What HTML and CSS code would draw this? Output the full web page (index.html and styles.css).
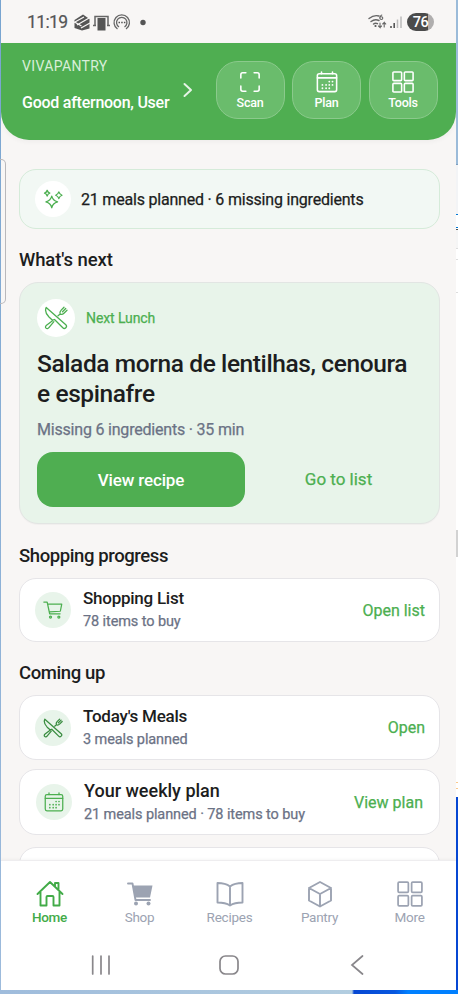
FILE: index.html
```html
<!DOCTYPE html>
<html lang="en">
<head>
<meta charset="utf-8">
<title>VivaPantry</title>
<link rel="stylesheet" href="styles.css">
</head>
<body>
<svg class="defs" aria-hidden="true">
  <symbol id="calendar" viewBox="0 0 24 24"><rect x="1.500" y="3" width="21" height="19.500" rx="2"/><path d="M1.500 7.500h21M6 1v2M18 1v2"/><path class="dots" d="M14.500 11.500h.01M18 11.500h.01M7 15.200h.01M11 15.200h.01M14.500 15.200h.01M18 15.200h.01M7 18.800h.01M11 18.800h.01M14.500 18.800h.01"/></symbol>
  <symbol id="grid" viewBox="0 0 24 24"><rect x="1" y="1" width="9.500" height="9.500" rx="1"/><rect x="13.500" y="1" width="9.500" height="9.500" rx="1"/><rect x="1" y="13.500" width="9.500" height="9.500" rx="1"/><rect x="13.500" y="13.500" width="9.500" height="9.500" rx="1"/></symbol>
  <symbol id="utensils" viewBox="0 0 24 24"><path d="M2.200 1.500C.8 4.500 2 8 5 11l3.500 3.200 2-.7 8.300 8.300c1 1 2.200.8 3 0s1-2 0-3L13 11z"/><path d="M8.500 14.800l-6 4.500c-1.200 1-1.300 2-.5 2.800s2 .7 2.900-.4l5-6M14 9.800l2.200-1.700c-.8-1.500-.2-2.800 1-4L20 1.300M23 4.200L20.200 7c-1.200 1.200-2.700 1.800-4 1.100M18.500 5.700l3.200-3.200"/></symbol>
</svg>
<div class="desktop">
  <div class="edge-left"></div>
  <main class="phone">
    <div class="status">
      <span class="clock">11:19</span>
      <svg class="notif" viewBox="0 0 78 20"><path fill="#555" d="M1.500 8L10 2.500l6.500 4.500v9.500L9 18.500l-7.500-2.500z"/><path stroke="#f8f6f5" stroke-width="1.300" fill="none" d="M1 10.500l10-5.500M4 13l13-7.500M8 16l9-5M1.500 10l7 4"/><path fill="none" stroke="#666" stroke-width="1.500" d="M22 13V4.500h13V13M20 13.500h3M34 13.500h3"/><path fill="#555" d="M24.500 6h8v12.500h-8z"/><g fill="none" stroke="#666" stroke-width="1.300"><path d="M44.500 17a7.700 7.700 0 1 1 8.500 0M46 15a5.200 5.200 0 1 1 5.500 0"/></g><path d="M45.500 10.500h7" stroke="#555" stroke-width="1.500" stroke-dasharray="1.500 1.200"/><circle cx="70" cy="10.500" r="2.700" fill="#555"/></svg>
      <svg class="signal" viewBox="0 0 36 18"><g fill="none" stroke="#666" stroke-width="1.400" stroke-linecap="round"><path d="M1 5.500q5-4 10-2.500M3 8.500q4-3 8-1M5.500 11q2-1.500 4-.3"/><path stroke-width="1.100" d="M13.800 2c-2.500 1-2.500 4.500-.5 4.500s2-2.800 0-2.800-1.500.8-1.500 1.300M12 10v4.500l-1.500-1.500M12 14.500l1.500-1.500M16.200 14V9.500L14.700 11M16.200 9.500l1.500 1.500"/></g><circle cx="7.500" cy="13" r="1.100" fill="#555"/><path stroke="#555" stroke-width="1.600" d="M23 15v-2M26.200 15v-5"/><path stroke="#bbb" stroke-width="1.500" d="M29.500 15V6.500M33 15V3.500"/></svg>
      <span class="battery">76</span>
    </div>
    <header class="header">
      <div class="hello"><div class="brand">VIVAPANTRY</div><div class="greeting">Good afternoon, User</div></div>
      <svg class="chev" viewBox="0 0 10 16"><path d="M1.500 2l6.500 6-6.500 6"/></svg>
      <div class="tiles">
        <div class="tile"><svg class="icon" viewBox="0 0 24 24"><path d="M2 7.500V4a2 2 0 0 1 2-2h3.500M16.500 2H20a2 2 0 0 1 2 2v3.500M22 16.500V20a2 2 0 0 1-2 2h-3.500M7.500 22H4a2 2 0 0 1-2-2v-3.500"/></svg><span>Scan</span></div>
        <div class="tile"><svg class="icon"><use href="#calendar"/></svg><span>Plan</span></div>
        <div class="tile"><svg class="icon"><use href="#grid"/></svg><span>Tools</span></div>
      </div>
    </header>
    <section class="content">
      <div class="summary">
        <div class="bubble"><svg class="icon sparkle" viewBox="0 0 24 24"><path d="M10.500 8.500q1.200 5.300 7 7-5.800 1.700-7 7-1.200-5.300-7-7 5.800-1.700 7-7zM5 1.500q.7 2.800 3.200 3.500Q5.700 5.700 5 8.500 4.300 5.700 1.800 5 4.300 4.300 5 1.500zM19 3.500q.9 3 3.800 4-2.900 1-3.800 4-.9-3-3.800-4 2.900-1 3.800-4z"/></svg></div>
        <span>21 meals planned · 6 missing ingredients</span>
      </div>
      <h2 class="first">What's next</h2>
      <article class="next">
        <div class="next-head"><div class="bubble big"><svg class="icon"><use href="#utensils"/></svg></div><span>Next Lunch</span></div>
        <h1>Salada morna de lentilhas, cenoura<br>e espinafre</h1>
        <p>Missing 6 ingredients · 35 min</p>
        <div class="buttons"><div class="primary">View recipe</div><div class="secondary">Go to list</div></div>
      </article>
      <h2 class="second">Shopping progress</h2>
      <div class="row shopping">
        <div class="bubble tint"><svg class="icon cart" viewBox="0 0 24 24"><path d="M1 2.500h4l3 14h12.500M5.500 5h17l-1.700 8.500-13.300.8"/><circle cx="9" cy="20.500" r="1.200"/><circle cx="19" cy="20.500" r="1.200"/></svg></div>
        <div class="info"><h3>Shopping List</h3><p>78 items to buy</p></div><span class="action">Open list</span>
      </div>
      <h2 class="third">Coming up</h2>
      <div class="row">
        <div class="bubble tint dark"><svg class="icon"><use href="#utensils"/></svg></div>
        <div class="info"><h3>Today's Meals</h3><p>3 meals planned</p></div><span class="action">Open</span>
      </div>
      <div class="row weekly">
        <div class="bubble tint"><svg class="icon"><use href="#calendar"/></svg></div>
        <div class="info"><h3>Your weekly plan</h3><p>21 meals planned · 78 items to buy</p></div><span class="action">View plan</span>
      </div>
      <div class="row last"></div>
    </section>
    <nav class="nav">
      <div class="tab active"><svg class="icon" viewBox="0 0 28 28"><path d="M1.500 14L14 2l12.500 12M4.500 12v13.500h6V17q0-1 1-1h5q1 0 1 1v8.500h6V12M19 6.500V3h3.500v7"/></svg><span>Home</span></div>
      <div class="tab"><svg class="icon" viewBox="0 0 28 28"><path d="M2 3.500h4.500l3 16.500H24"/><path fill="currentColor" stroke="none" d="M6.500 5.500h20l-2.500 12H9z"/><g fill="currentColor" stroke="none"><circle cx="10" cy="23.500" r="2"/><circle cx="22.500" cy="23.500" r="2"/></g></svg><span>Shop</span></div>
      <div class="tab"><svg class="icon" viewBox="0 0 28 28"><path d="M14 6.500Q9.500 3 1.500 3v19.500q8 0 12.500 3 4.500-3 12.500-3V3Q18.500 3 14 6.500zM14 6.500v19"/></svg><span>Recipes</span></div>
      <div class="tab"><svg class="icon" viewBox="0 0 28 28"><path d="M14 2l11 6v12.500l-11 6-11-6V8zM3 8l11 6 11-6M14 14v12.500"/></svg><span>Pantry</span></div>
      <div class="tab"><svg class="icon more"><use href="#grid"/></svg><span>More</span></div>
    </nav>
    <div class="system">
      <svg viewBox="0 0 20 20"><path d="M1.700 1v18M10 1v18M18 1v18"/></svg>
      <svg viewBox="0 0 20 20"><rect x="1" y="1" width="18" height="18" rx="5.500"/></svg>
      <svg viewBox="0 0 20 20"><path d="M15.500 1L5 10l10.500 9"/></svg>
    </div>
  </main>
  <div class="edge-right"><i class="sky"></i><i class="pane"></i><i class="lines"></i><i class="page"></i><i class="thumb"></i><i class="page2"></i><i class="deep"></i></div>
  <div class="edge-bottom"></div>
</div>
<div class="behind"></div>
</body>
</html>
```
FILE: styles.css
```css
* { box-sizing: border-box; }
body { margin: 0; position: relative; overflow: hidden; color: #1c1d20; font-family: Roboto, "Liberation Sans", sans-serif; font-weight: 500; letter-spacing: -.25px; }
h1, h2, h3, p { margin: 0; font-weight: 500; }
svg { display: block; flex: none; }
.defs { position: absolute; width: 0; height: 0; }
.desktop { display: grid; grid-template-columns: 1px 455px 2px; grid-template-rows: 990px 4px; }
.edge-left { background: linear-gradient(#78a4d0, #9dbbdc); }
.phone { display: flex; flex-direction: column; background: #f8f6f5; overflow: hidden; }
.edge-right { display: flex; flex-direction: column; background: #fff; }
.sky { height: 165px; background: #9bbbd9; border-bottom: 1px solid #7d9fc0; }
.pane { height: 83px; background: linear-gradient(#f3f4f6 49px, #0078d4 49px 50px, #fff 50px 62px, #0078d4 62px 63px, #fff 63px 64px, #555 64px 65px, #f5f5f5 65px); }
.lines { height: 45px; background: linear-gradient(#ddd 1px, #fff 1px 11px, #ddd 11px 12px, #fff 12px 44px, #ddd 44px); }
.page { height: 237px; }
.thumb { height: 27px; background: #d2d2d2; }
.page2 { height: 240px; background: linear-gradient(#fff 225px, #fac88c 225px 226px, #fff 226px 231px, #fac88c 231px 232px, #fff 232px); }
.deep { flex: 1; background: #0647d3; }
.edge-bottom { grid-column: 1 / -1; background: linear-gradient(90deg, #9fbcdc, #b2cde0 352px, #0647d3 354px, #0757df 395px, #0080ff 408px); }
.behind { position: absolute; left: 0; top: 159px; width: 6px; height: 145px; border: 1px solid #b9b8bb; border-left: 0; border-radius: 0 5px 5px 0; }

.status { flex: none; height: 43px; display: flex; align-items: center; padding-left: 26px; color: #555; }
.clock { width: 46px; font-size: 17.500px; font-weight: 400; line-height: 20px; letter-spacing: -.6px; -webkit-text-stroke: .2px; }
.notif { width: 78px; height: 20px; }
.signal { width: 36px; height: 18px; margin-left: 217px; }
.battery { width: 27px; height: 18px; margin-left: 3px; border-radius: 9px; background: linear-gradient(90deg, #4b4b4b 21px, #b0aeae 21px); color: #fff; font-size: 14.500px; line-height: 19px; text-align: center; letter-spacing: -.6px; }

.header { flex: none; height: 97px; display: flex; align-items: flex-start; padding: 0 18.500px 0 21px; background: #4fae51; color: #fff; border-radius: 0 0 28px 28px; box-shadow: 0 2px 5px #0000000a; }
.hello { width: 161px; padding-top: 13px; white-space: nowrap; }
.brand { font-size: 14px; font-weight: 400; line-height: 21px; letter-spacing: .35px; color: #d9efd9; }
.greeting { margin-top: 14px; font-size: 16px; line-height: 24px; }
.chev { width: 10px; height: 16px; margin-top: 39px; fill: none; stroke: #e5f3e5; stroke-width: 2; stroke-linecap: round; stroke-linejoin: round; }
.tiles { margin: 18px 0 0 auto; display: flex; gap: 7.500px; }
.tile { width: 69px; height: 58px; display: flex; flex-direction: column; align-items: center; border: 1px solid #8bca8c; border-radius: 22px; background: #6abc6c; padding-top: 9px; font-size: 12.500px; line-height: 18px; }
.icon { width: 22px; height: 22px; fill: none; stroke: currentColor; stroke-width: 1.700; stroke-linecap: round; stroke-linejoin: round; }
.dots { stroke-width: 2; }
.tile span { margin-top: 1px; }

.content { flex: none; height: 720px; overflow: hidden; padding: 29px 16px 0 18px; }
.summary { height: 60px; display: flex; align-items: center; gap: 10px; padding: 0 15px; border: 1px solid #d5ebd9; border-radius: 17px; background: #f2f8f4; font-size: 16px; font-weight: 400; letter-spacing: -.2px; -webkit-text-stroke: .25px; white-space: nowrap; }
.bubble { flex: none; width: 36px; height: 36px; display: grid; place-items: center; border-radius: 50%; background: #fff; color: #4caf50; }
.bubble .icon { width: 20px; height: 20px; stroke-width: 1.500; }
.bubble.big { width: 38px; height: 38px; }
.bubble.big .icon { width: 24px; height: 24px; stroke-width: 1.300; }
.bubble.tint { background: #e8f4ea; }
.bubble.dark { color: #398c3f; }
h2 { font-size: 18.500px; line-height: 24px; letter-spacing: -.4px; white-space: nowrap; }
.first { margin: 19px 0 10px; letter-spacing: -.1px; }
.second { margin: 20px 0 10px; }
.third { margin: 19px 0 10px; }
.next { height: 242px; padding: 16px 17px; border: 1px solid #e2e5e3; border-radius: 19px; background: #e8f4ea; box-shadow: 0 1px 1px #00000008; }
.next-head { display: flex; align-items: center; gap: 11px; color: #4caf50; font-size: 14px; font-weight: 400; letter-spacing: -.1px; -webkit-text-stroke: .25px; }
h1 { margin-top: 12px; font-size: 24.500px; line-height: 30px; letter-spacing: -.4px; white-space: nowrap; }
.next p { margin-top: 9px; font-size: 16px; font-weight: 400; line-height: 24px; letter-spacing: -.2px; -webkit-text-stroke: .25px; color: #6b7285; }
.buttons { display: grid; grid-template-columns: 208px 1fr; gap: 10px; margin-top: 10px; height: 55px; line-height: 56px; text-align: center; font-size: 17px; letter-spacing: -.15px; }
.primary { height: 55px; border-radius: 16px; background: #4fae51; color: #fff; }
.secondary { color: #4caf50; line-height: 55px; font-weight: 400; letter-spacing: 0; -webkit-text-stroke: .25px; }
.row { height: 65px; display: flex; align-items: center; padding: 0 14px 0 15px; border: 1px solid #e6e5e8; border-radius: 17px; background: #fff; white-space: nowrap; }
.shopping { height: 64px; }
.info { flex: 1; margin-left: 12px; }
h3 { font-size: 17px; line-height: 23px; }
.info p { font-size: 14.500px; font-weight: 400; line-height: 22px; letter-spacing: -.1px; -webkit-text-stroke: .25px; color: #6b7285; padding-top: 1px; }
.action { color: #4caf50; font-size: 16px; font-weight: 400; letter-spacing: 0; -webkit-text-stroke: .25px; }
.weekly { height: 66px; margin-top: 9px; padding: 0 16px; }
.weekly h3 { font-size: 18px; line-height: 24px; letter-spacing: 0; }
.last { margin-top: 12px; }

.nav { flex: none; height: 70px; display: grid; grid-template-columns: repeat(5, 90px); padding: 19px 1.500px 0 3.500px; background: #fff; border-top: 1px solid #eeedef; box-shadow: 0 -1px 3px #0000000a; }
.tab { display: flex; flex-direction: column; align-items: center; color: #9ca3b2; font-size: 13.500px; font-weight: 400; line-height: 18px; }
.tab .icon { width: 28px; height: 28px; stroke-width: 1.900; }
.tab .more { width: 26px; height: 26px; margin: 1px; stroke-width: 1.600; }
.active { color: #42ab48; font-weight: 500; }
.system { flex: none; height: 60px; display: flex; justify-content: space-between; padding: 25px 89px 0 90px; background: #fff; }
.system svg { width: 20px; height: 20px; fill: none; stroke: #89878b; stroke-width: 1.700; stroke-linecap: round; }
```
